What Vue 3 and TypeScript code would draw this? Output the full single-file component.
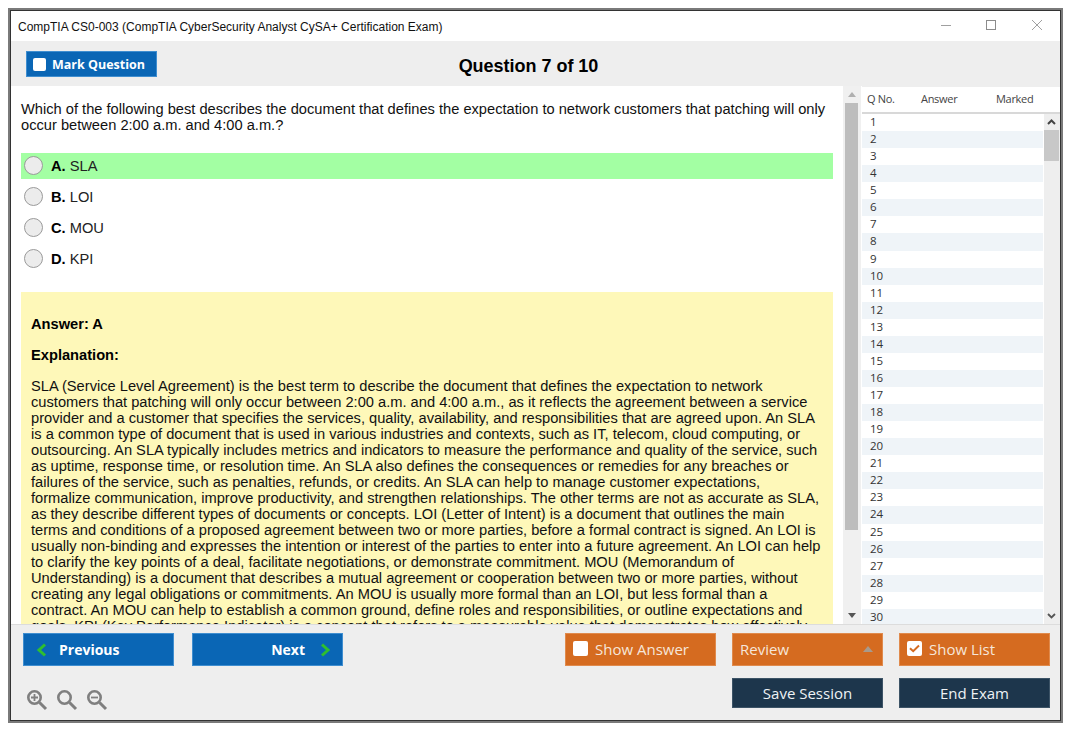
<script setup lang="ts">
const options = [
  { key: 'A.', text: 'SLA', selected: true },
  { key: 'B.', text: 'LOI', selected: false },
  { key: 'C.', text: 'MOU', selected: false },
  { key: 'D.', text: 'KPI', selected: false },
]
const lines: string[] = [
  'SLA (Service Level Agreement) is the best term to describe the document that defines the expectation to network',
  'customers that patching will only occur between 2:00 a.m. and 4:00 a.m., as it reflects the agreement between a service',
  'provider and a customer that specifies the services, quality, availability, and responsibilities that are agreed upon. An SLA',
  'is a common type of document that is used in various industries and contexts, such as IT, telecom, cloud computing, or',
  'outsourcing. An SLA typically includes metrics and indicators to measure the performance and quality of the service, such',
  'as uptime, response time, or resolution time. An SLA also defines the consequences or remedies for any breaches or',
  'failures of the service, such as penalties, refunds, or credits. An SLA can help to manage customer expectations,',
  'formalize communication, improve productivity, and strengthen relationships. The other terms are not as accurate as SLA,',
  'as they describe different types of documents or concepts. LOI (Letter of Intent) is a document that outlines the main',
  'terms and conditions of a proposed agreement between two or more parties, before a formal contract is signed. An LOI is',
  'usually non-binding and expresses the intention or interest of the parties to enter into a future agreement. An LOI can help',
  'to clarify the key points of a deal, facilitate negotiations, or demonstrate commitment. MOU (Memorandum of',
  'Understanding) is a document that describes a mutual agreement or cooperation between two or more parties, without',
  'creating any legal obligations or commitments. An MOU is usually more formal than an LOI, but less formal than a',
  'contract. An MOU can help to establish a common ground, define roles and responsibilities, or outline expectations and',
  'goals. KPI (Key Performance Indicator) is a concept that refers to a measurable value that demonstrates how effectively',
]
const rows: number[] = Array.from({ length: 30 }, (_, i) => i + 1)
</script>

<template>
  <div class="window">
    <div class="titlebar">
      <span class="title">CompTIA CS0-003 (CompTIA CyberSecurity Analyst CySA+ Certification Exam)</span>
      <div class="controls">
        <svg width="14" height="14" viewBox="0 0 14 14"><path d="M3 6.5h10" stroke="#a0a0a0" fill="none" /></svg>
        <svg width="14" height="14" viewBox="0 0 14 14"><rect x="2.5" y="1.5" width="9" height="9" stroke="#8c8c8c" fill="none" /></svg>
        <svg width="14" height="14" viewBox="0 0 14 14"><path d="M2 1l10 10M12 1L2 11" stroke="#a0a0a0" fill="none" /></svg>
      </div>
    </div>

    <div class="headbar">
      <button class="btn blue mark">
        <span class="check small"></span>
        <span>Mark Question</span>
      </button>
      <div class="qtitle">Question 7 of 10</div>
    </div>

    <div class="middle">
      <div class="content">
        <div class="scrollpane">
          <p class="question">Which of the following best describes the document that defines the expectation to network customers that patching will only<br />occur between 2:00 a.m. and 4:00 a.m.?</p>
          <div class="options">
            <div v-for="o in options" :key="o.key" class="option" :class="{ selected: o.selected }">
              <span class="radio"></span>
              <b>{{ o.key }}</b>&nbsp;<span>{{ o.text }}</span>
            </div>
          </div>
          <div class="answer">
            <p class="ans-head">Answer: A</p>
            <p class="ans-head expl">Explanation:</p>
            <div class="lines">
              <div v-for="l in lines" :key="l">{{ l }}</div>
            </div>
          </div>
        </div>
        <div class="vscroll">
          <svg width="8" height="5" viewBox="0 0 8 5"><path d="M4 0l4 5H0z" fill="#b0b0b0" /></svg>
          <div class="vthumb"></div>
          <svg class="down" width="8" height="5" viewBox="0 0 8 5"><path d="M4 5l4-5H0z" fill="#555" /></svg>
        </div>
      </div>

      <aside class="side">
        <div class="side-head">
          <span class="c1">Q No.</span><span class="c2">Answer</span><span class="c3">Marked</span>
        </div>
        <div class="side-body">
          <div class="rows">
            <div v-for="r in rows" :key="r" class="row" :class="{ alt: r % 2 === 0 }">{{ r }}</div>
          </div>
          <div class="listscroll">
            <svg class="chev" width="9" height="6" viewBox="0 0 9 6"><path d="M1 5l3.5-3.5L8 5" stroke="#444" stroke-width="2" fill="none" /></svg>
            <div class="listthumb"></div>
            <svg class="chev last" width="9" height="6" viewBox="0 0 9 6"><path d="M1 1l3.5 3.5L8 1" stroke="#555" stroke-width="1.8" fill="none" /></svg>
          </div>
        </div>
      </aside>
    </div>

    <div class="footer">
      <div class="foot-left">
        <div class="nav">
          <button class="btn blue navbtn">
            <svg width="11" height="14" viewBox="0 0 11 14"><path d="M9 1.5L3 7l6 5.5" stroke="#2fbf2f" stroke-width="3" fill="none" /></svg>
            <span>Previous</span>
          </button>
          <button class="btn blue navbtn next">
            <span>Next</span>
            <svg width="11" height="14" viewBox="0 0 11 14"><path d="M2 1.5L8 7l-6 5.5" stroke="#2fbf2f" stroke-width="3" fill="none" /></svg>
          </button>
        </div>
        <div class="zooms">
          <svg width="22" height="22" viewBox="0 0 22 22"><circle cx="7.5" cy="8.5" r="6.2" stroke="#7f7f7f" stroke-width="2.6" fill="none" /><path d="M12.5 13.5L19 20" stroke="#7f7f7f" stroke-width="3" /><path d="M4 8.5h7M7.5 5v7" stroke="#7f7f7f" stroke-width="1.8" /></svg>
          <svg width="22" height="22" viewBox="0 0 22 22"><circle cx="7.5" cy="8.5" r="6.2" stroke="#7f7f7f" stroke-width="2.6" fill="none" /><path d="M12.5 13.5L19 20" stroke="#7f7f7f" stroke-width="3" /></svg>
          <svg width="22" height="22" viewBox="0 0 22 22"><circle cx="7.5" cy="8.5" r="6.2" stroke="#7f7f7f" stroke-width="2.6" fill="none" /><path d="M12.5 13.5L19 20" stroke="#7f7f7f" stroke-width="3" /><path d="M4 8.5h7" stroke="#7f7f7f" stroke-width="1.8" /></svg>
        </div>
      </div>
      <div class="foot-right">
        <button class="btn orange">
          <span class="check"></span>
          <span>Show Answer</span>
        </button>
        <button class="btn orange review">
          <span>Review</span>
          <svg width="10" height="6" viewBox="0 0 10 6"><path d="M5 0l5 6H0z" fill="#a89a8c" /></svg>
        </button>
        <button class="btn orange">
          <span class="check">
            <svg width="11" height="9" viewBox="0 0 11 9"><path d="M1 4.2l3.2 3L10 1.5" stroke="#d56b20" stroke-width="2" fill="none" /></svg>
          </span>
          <span>Show List</span>
        </button>
        <span></span>
        <button class="btn navy">Save Session</button>
        <button class="btn navy">End Exam</button>
      </div>
    </div>
  </div>
</template>

<style scoped>
.window {
  box-sizing: border-box;
  width: 1055px;
  height: 715px;
  margin: 8px 0 0 8px;
  border: 2px solid #7a7a7a;
  outline: 1px solid #333;
  outline-offset: -3px;
  padding: 1px;
  background: #eeeeee;
  display: flex;
  flex-direction: column;
  font-family: "Liberation Sans", Arial, sans-serif;
  color: #000;
  overflow: hidden;
}
p { margin: 0; }
.titlebar {
  height: 30px;
  background: #fff;
  display: flex;
  align-items: center;
  justify-content: space-between;
  flex: none;
}
.title {
  font-size: 12px;
  line-height: 14px;
  padding: 2px 0 0 7px;
  color: #111;
}
.controls {
  display: flex;
  gap: 32px;
  padding-right: 16px;
  align-items: center;
}
.controls svg { display: block; }
.headbar {
  height: 45px;
  flex: none;
  background: #eeeeee;
  position: relative;
  display: flex;
  align-items: center;
  padding-left: 15px;
}
.qtitle {
  position: absolute;
  left: 0;
  right: 0;
  top: 14px;
  text-align: center;
  font-size: 18px;
  font-weight: bold;
  line-height: 22px;
  letter-spacing: -0.02px;
  transform: translateX(-7px);
  pointer-events: none;
}
.btn {
  border: 1px solid transparent;
  margin: 0;
  padding: 0;
  font-family: "Open Sans", "Noto Sans", sans-serif;
  color: #fff;
  display: flex;
  align-items: center;
  box-sizing: border-box;
}
.blue { background: #0a66b5; border-color: #3f8ed0; }
.orange { background: #d56b20; border-color: #e08a4c; }
.navy { background: #1d364c; border-color: #3c5366; justify-content: center; font-size: 15px; color: #eef2f5; }
.mark {
  width: 131px;
  height: 26px;
  margin-top: 1px;
  font-size: 12.5px;
  font-weight: 700;
  padding-left: 6px;
  gap: 6px;
}
.check {
  box-sizing: border-box;
  width: 15px;
  height: 15px;
  background: #fff;
  border-radius: 2px;
  display: flex;
  align-items: center;
  justify-content: center;
  flex: none;
}
.check.small { width: 13px; height: 13px; }
.middle {
  flex: 1;
  min-height: 0;
  display: flex;
  background: #fff;
}
.content {
  width: 850px;
  flex: none;
  display: flex;
  overflow: hidden;
}
.scrollpane {
  width: 832px;
  flex: none;
  padding: 15px 0 0 10px;
  box-sizing: border-box;
  overflow: hidden;
}
.question {
  font-size: 14.67px;
  line-height: 16px;
  color: #111;
  white-space: nowrap;
}
.options {
  margin-top: 20px;
  width: 812px;
}
.option {
  height: 26px;
  margin-bottom: 5px;
  display: flex;
  align-items: center;
  font-size: 14.67px;
  color: #222;
  white-space: pre;
}
.option b { color: #000; }
.option.selected { background: #a3ffa3; }
.radio {
  box-sizing: border-box;
  width: 19px;
  height: 19px;
  margin: -1px 8px 0 3px;
  border-radius: 50%;
  background: #ececec;
  border: 1px solid #9a9a9a;
  flex: none;
}
.answer {
  margin-top: 20px;
  width: 812px;
  background: #fef8b9;
  padding: 24px 0 0 10px;
  box-sizing: border-box;
  height: 340px;
  overflow: hidden;
}
.ans-head {
  font-size: 14.67px;
  font-weight: bold;
  line-height: 16px;
}
.expl { margin-top: 15px; }
.lines {
  margin-top: 15px;
  font-size: 14.67px;
  line-height: 16px;
  white-space: nowrap;
  color: #111;
}
.vscroll {
  width: 18px;
  flex: none;
  display: flex;
  flex-direction: column;
  align-items: center;
  background: #f0f0f0;
  padding: 6px 1px 0 0;
  box-sizing: border-box;
}
.vscroll svg { display: block; flex: none; }
.vthumb {
  width: 13px;
  height: 427px;
  margin-top: 6px;
  background: #bdbdbd;
  flex: none;
}
.vscroll .down { margin-top: 83px; }
.side {
  flex: 1;
  min-width: 0;
  margin-left: 1px;
  display: flex;
  flex-direction: column;
  overflow: hidden;
  background: #eeeeee;
}
.side-head {
  height: 23px;
  padding-bottom: 2px;
  flex: none;
  background: #fff;
  border-top: 1px solid #eeeeee;
  border-bottom: 2px solid #d8d8d8;
  display: flex;
  align-items: center;
  font-family: "Open Sans", "Noto Sans", sans-serif;
  font-size: 11px;
  color: #444;
  letter-spacing: -0.3px;
}
.c1 { margin-left: 5px; width: 54px; }
.c2 { width: 75px; }
.side-body {
  flex: 1;
  min-height: 0;
  display: flex;
}
.rows {
  width: 182px;
  flex: none;
  background: #fff;
  overflow: hidden;
}
.row {
  height: 17.07px;
  line-height: 16.5px;
  padding-left: 8px;
  margin-right: 1px;
  font-family: "Open Sans", "Noto Sans", sans-serif;
  font-size: 11.5px;
  color: #333;
}
.row.alt { background: #eff4f8; }
.listscroll {
  flex: 1;
  display: flex;
  flex-direction: column;
  align-items: flex-start;
  padding-top: 5px;
  background: #eeeeee;
  position: relative;
}
.chev { display: block; flex: none; margin-left: 3px; }
.listthumb {
  width: 15px;
  height: 31px;
  margin-top: 5px;
  background: #c8c8c8;
}
.chev.last { position: absolute; bottom: 5px; left: 0; }
.footer {
  height: 96px;
  flex: none;
  box-sizing: border-box;
  border-top: 1px solid #dcdcdc;
  display: flex;
  justify-content: space-between;
  padding: 8px 10px 0 12px;
  background: #eeeeee;
}
.nav { display: flex; gap: 18px; }
.navbtn {
  width: 151px;
  height: 33px;
  font-size: 14px;
  font-weight: 700;
  padding-left: 12px;
  gap: 12px;
}
.navbtn.next {
  justify-content: flex-end;
  padding: 0 11px 0 0;
  gap: 15px;
}
.zooms {
  display: flex;
  gap: 8px;
  margin: 23px 0 0 4px;
}
.zooms svg { display: block; }
.foot-right {
  display: grid;
  grid-template-columns: 151px 151px 151px;
  grid-auto-rows: 33px;
  column-gap: 16px;
  row-gap: 12px;
}
.foot-right .orange {
  font-size: 15px;
  padding: 0 0 2px 7px;
  gap: 7px;
  height: 33px;
  color: #f6e6da;
}
.foot-right .review {
  justify-content: space-between;
  padding: 0 9px 2px 7px;
}
.foot-right .navy { height: 30px; }
</style>

<style>
html, body { background: #fff; }
</style>
